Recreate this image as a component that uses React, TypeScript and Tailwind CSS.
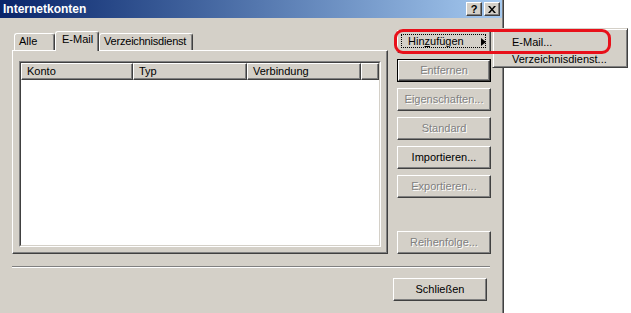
import React from "react";

const raised =
  "border border-t-white border-l-white border-r-[#404040] border-b-[#404040] shadow-[inset_-1px_-1px_0_#808080]";

const disabledText = "text-[#808080] [text-shadow:1px_1px_0_#ffffff]";

const Btn = ({
  label,
  disabled,
  frame,
}: {
  label: string;
  disabled?: boolean;
  frame?: boolean;
}) => (
  <div className={`w-[94px] h-[23px] ${frame ? "border border-black" : ""}`}>
    <div
      className={`flex h-full w-full items-center justify-center bg-[#d4d0c8] ${raised} ${
        disabled ? disabledText : "text-black"
      }`}
    >
      {label}
    </div>
  </div>
);

const Tab = ({ label, active, w }: { label: string; active?: boolean; w: string }) => (
  <div
    className={`${w} flex items-start rounded-t-[3px] bg-[#d4d0c8] border-t border-l border-t-white border-l-white border-r border-r-[#404040] shadow-[inset_-1px_0_0_#808080] ${
      active ? "relative z-10 h-[20px] -mb-px pt-[2px] pl-[6px]" : "h-[17px] pt-[2px] pl-[4px]"
    }`}
  >
    {label}
  </div>
);

const HeaderCell = ({ label, w }: { label: string; w: string }) => (
  <div className={`${w} h-full flex items-center pl-[5px] bg-[#d4d0c8] ${raised}`}>{label}</div>
);

export default function App() {
  return (
    <div className="relative w-[631px] h-[313px] overflow-hidden bg-white text-[11px] leading-none text-black font-['Liberation_Sans',Arial,sans-serif]">
      <div className="flex flex-col w-[504px] h-[313px] bg-[#d4d0c8] border-r border-r-[#404040] shadow-[inset_-1px_0_0_#808080]">
        {/* title bar */}
        <div className="flex items-center h-[18px] mr-[1px] pl-[3px] pr-[2px] bg-linear-to-r from-[#0a246a] to-[#a6caf0]">
          <span className="flex-1 text-white font-bold text-[12px]">Internetkonten</span>
          <div className="flex gap-[2px]">
            <div className={`flex h-[14px] w-[16px] items-center justify-center bg-[#d4d0c8] font-bold text-[11px] ${raised}`}>
              ?
            </div>
            <div className={`flex h-[14px] w-[16px] items-center justify-center bg-[#d4d0c8] ${raised}`}>
              <svg width="8" height="7" viewBox="0 0 8 7">
                <path d="M0 0h2l2 2.5L6 0h2L5 3.5 8 7H6L4 4.5 2 7H0l3-3.5z" fill="#000" />
              </svg>
            </div>
          </div>
        </div>

        <div className="flex flex-col pl-[12px] pt-[12px]">
          <div className="flex">
            {/* left: tabs + panel */}
            <div className="flex flex-col w-[376px]">
              <div className="flex items-end h-[20px] pl-[2px]">
                <Tab label="Alle" w="w-[41px]" />
                <Tab label="E-Mail" w="w-[44px]" active />
                <div className="tracking-[-0.2px]">
                  <Tab label="Verzeichnisdienst" w="w-[94px]" />
                </div>
              </div>
              <div className={`h-[204px] pl-[6px] pt-[10px] ${raised}`}>
                <div className="w-[362px] h-[186px] border border-t-[#808080] border-l-[#808080] border-b-white border-r-white">
                  <div className="h-full w-full bg-white border border-t-[#404040] border-l-[#404040] border-b-[#d4d0c8] border-r-[#d4d0c8]">
                    <div className="flex h-[17px]">
                      <HeaderCell label="Konto" w="w-[112px]" />
                      <HeaderCell label="Typ" w="w-[114px]" />
                      <HeaderCell label="Verbindung" w="w-[114px]" />
                      <HeaderCell label="" w="w-[18px]" />
                    </div>
                  </div>
                </div>
              </div>
            </div>

            {/* right: buttons */}
            <div className="flex flex-col gap-[6px] ml-[9px] w-[94px]">
              <div className={`relative flex h-[23px] w-[94px] items-center bg-[#d4d0c8] pl-[10px] ${raised}`}>
                <span>
                  Hin<span className="underline">z</span>ufügen
                </span>
                <svg className="absolute left-[83px] top-[7px]" width="5" height="8" viewBox="0 0 5 8">
                  <path d="M0 0L5 4L0 8z" fill="#000" />
                </svg>
                <div className="absolute left-[3px] top-[3px] right-[4px] bottom-[4px] border border-dotted border-black" />
              </div>
              <Btn label="Entfernen" disabled frame />
              <Btn label="Eigenschaften..." disabled />
              <Btn label="Standard" disabled />
              <Btn label="Importieren..." />
              <Btn label="Exportieren..." disabled />
              <div className="mt-[27px]">
                <Btn label="Reihenfolge..." disabled />
              </div>
            </div>
          </div>

          {/* separator */}
          <div className="mt-[12px] w-[478px] h-[2px] border-t border-t-[#808080] border-b border-b-white" />

          <div className="mt-[10px] ml-[381px]">
            <Btn label="Schließen" />
          </div>
        </div>
      </div>

      {/* submenu */}
      <div className="absolute left-[492px] top-[28px] w-[136px] h-[40px] bg-[#d4d0c8] border border-t-[#d4d0c8] border-l-[#d4d0c8] border-r-[#404040] border-b-[#404040] shadow-[inset_1px_1px_0_#ffffff,inset_-1px_-1px_0_#808080]">
        <div className="flex flex-col pt-[5px] pl-[19px]">
          <div className="flex items-center h-[17px]">E-Mail...</div>
          <div className="flex items-center h-[17px]">Verzeichnisdienst...</div>
        </div>
      </div>

      {/* red annotation */}
      <div className="absolute left-[394px] top-[29px] w-[217px] h-[25px] rounded-[9px] border-[3px] border-[#e8101a]" />
    </div>
  );
}
